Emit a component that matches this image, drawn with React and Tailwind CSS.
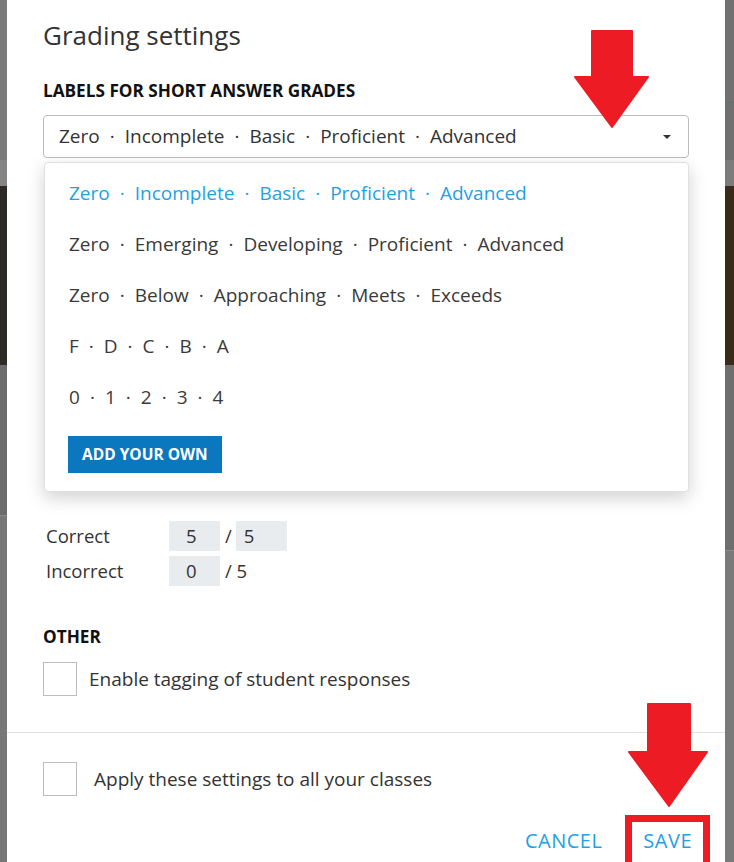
function Dotted({ parts }) {
  return (
    <span className="whitespace-nowrap">
      {parts.map((p, i) => (
        <span key={i}>
          {i > 0 && <span className="mx-[10px]">·</span>}
          {p}
        </span>
      ))}
    </span>
  );
}

export default function App() {
  const options = [
    ["Zero", "Emerging", "Developing", "Proficient", "Advanced"],
    ["Zero", "Below", "Approaching", "Meets", "Exceeds"],
    ["F", "D", "C", "B", "A"],
    ["0", "1", "2", "3", "4"],
  ];
  const current = ["Zero", "Incomplete", "Basic", "Proficient", "Advanced"];

  return (
    <div
      className="relative flex h-[862px] w-[734px] overflow-hidden bg-[#727272] text-[#333]"
      style={{ fontFamily: "'Open Sans', 'Noto Sans', sans-serif" }}
    >
      {/* backdrop strip left */}
      <div className="flex w-[7px] flex-col">
        <div className="h-[160px] bg-[#7a7a7a]" />
        <div className="h-[26px] bg-[#848484]" />
        <div className="h-[179px] bg-[#2e2b26]" />
        <div className="h-[150px] bg-[#6c6c6c]" />
        <div className="flex-1 border-t border-[#8a8a8a] bg-[#777]" />
      </div>

      {/* MODAL */}
      <div className="flex flex-1 flex-col bg-white">
        <div className="px-[36px] pt-[20px]">
          <h1 className="text-[26px] leading-[30px] text-[#333]">Grading settings</h1>

          <h2 className="mt-[31px] text-[17.2px] font-bold leading-[20px] text-[#111]">
            LABELS FOR SHORT ANSWER GRADES
          </h2>

          {/* SELECT + MENU */}
          <div className="relative mt-[14px]">
            <div className="flex h-[43px] items-center justify-between rounded-[4px] border border-[#bdbdbd] pl-[15px] pr-[16px] text-[19px]">
              <Dotted parts={current} />
              <svg width="10" height="6" viewBox="0 0 10 6">
                <path d="M1 1h8L5 5z" fill="#333" />
              </svg>
            </div>

            <div className="absolute left-[1px] right-0 top-[47px] z-10 rounded-[4px] border border-[#e0e0e0] bg-white pb-[18px] pt-[5px] shadow-[0_6px_18px_rgba(0,0,0,0.18)]">
              <div className="flex h-[51px] items-center pl-[24px] text-[19px] text-[#1ea1e6]">
                <Dotted parts={current} />
              </div>
              {options.map((o) => (
                <div key={o[1]} className="flex h-[51px] items-center pl-[24px] text-[19px] text-[#3a3a3a]">
                  <Dotted parts={o} />
                </div>
              ))}
              <button className="ml-[23px] mt-[13px] h-[37px] bg-[#0b77bf] px-[14px] text-[15.5px] font-bold text-white">
                ADD YOUR OWN
              </button>
            </div>
          </div>

          {/* POINTS */}
          <div className="mt-[363px] flex flex-col gap-[5px] pl-[3px] text-[18.5px]">
            <div className="flex h-[30px] items-center">
              <span className="w-[123px]">Correct</span>
              <span className="flex h-[30px] w-[51px] items-center bg-[#e9ecef] pl-[17px]">5</span>
              <span className="pl-[5px] pr-[4px]">/</span>
              <span className="flex h-[30px] w-[51px] items-center bg-[#e9ecef] pl-[8px]">5</span>
            </div>
            <div className="flex h-[30px] items-center">
              <span className="w-[123px]">Incorrect</span>
              <span className="flex h-[30px] w-[51px] items-center bg-[#e9ecef] pl-[17px]">0</span>
              <span className="pl-[5px]">/ 5</span>
            </div>
          </div>

          <h2 className="mt-[41px] text-[17.2px] font-bold leading-[20px] text-[#111]">OTHER</h2>
          <label className="mt-[15px] flex items-center gap-[12px] text-[19px]">
            <span className="h-[34px] w-[34px] border border-[#bdbdbd]" />
            Enable tagging of student responses
          </label>
        </div>

        <div className="mt-[36px] border-t border-[#e0e0e0] px-[36px] pt-[29px]">
          <label className="flex items-center gap-[17px] text-[19px]">
            <span className="h-[34px] w-[34px] border border-[#bdbdbd]" />
            Apply these settings to all your classes
          </label>
          <div className="mt-[19px] flex items-start justify-end gap-[23px]">
            <button className="mt-[17px] text-[20px] leading-[18px] tracking-[0.5px] text-[#1ea1e6]">CANCEL</button>
            <button className="-mr-[21px] border-[7px] border-[#ed1c24] px-[11px] pb-[15px] pt-[10px] text-[20px] leading-[18px] tracking-[0.5px] text-[#1ea1e6]">
              SAVE
            </button>
          </div>
        </div>
      </div>

      {/* backdrop strip right */}
      <div className="flex w-[9px] flex-col">
        <div className="h-[102px] bg-[#717171]" />
        <div className="h-[58px] border-t border-[#5f7070] bg-[#707070]" />
        <div className="h-[26px] bg-[#7c7c7c]" />
        <div className="h-[179px] bg-[#3a2a18]" />
        <div className="h-[185px] bg-[#6e6e6e]" />
        <div className="flex-1 border-t border-[#8a8a8a] bg-[#7a7a7a]" />
      </div>

      {/* red annotation arrows */}
      <svg className="pointer-events-none absolute inset-0" width="734" height="862" viewBox="0 0 734 862">
        <path d="M592 31h40v46h16l-36 50-37-50h17z" fill="#ed1c24" stroke="#ed1c24" strokeWidth="2" strokeLinejoin="round" />
        <path d="M648 704h42v48h17l-38 54-40-54h19z" fill="#ed1c24" stroke="#ed1c24" strokeWidth="2" strokeLinejoin="round" />
      </svg>
    </div>
  );
}
